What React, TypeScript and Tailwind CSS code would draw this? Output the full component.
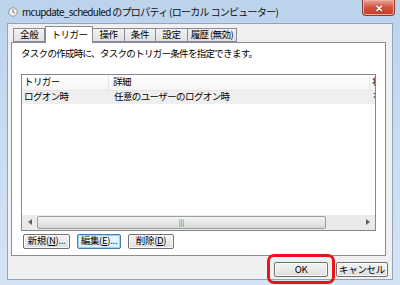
import type { ReactNode } from "react";

const jp =
  "font-['Noto_Sans_CJK_JP','Noto_Sans',sans-serif] [font-feature-settings:\"palt\"_1] [font-kerning:normal]";

function Tab({ label, active, tight }: { label: string; active?: boolean; tight?: boolean }) {
  if (active) {
    return (
      <div className="relative z-10 -mb-px flex h-[17px] items-center border border-b-0 border-[#898c95] bg-white px-[5px] text-[9.5px] leading-none tracking-[-0.5px] text-black">
        {label}
      </div>
    );
  }
  return (
    <div
      className={
        "-ml-px flex h-[14px] items-center border border-[#898c95] bg-gradient-to-b from-[#f3f3f3] to-[#e1e1e1] text-[9.5px] leading-none text-black first:ml-0 " +
        (tight ? "px-[3px] tracking-[-0.6px]" : "px-[6px] tracking-[-0.3px]")
      }
    >
      {label}
    </div>
  );
}

function Button({ children, width, focused }: { children: ReactNode; width: string; focused?: boolean }) {
  return (
    <div
      className={
        "flex h-[15px] items-center justify-center rounded-[2px] border text-[9.5px] leading-none tracking-[-0.3px] text-black " +
        width +
        (focused
          ? " border-[#3c7fb1] bg-gradient-to-b from-[#eaf6fd] to-[#d9effc] shadow-[inset_0_0_0_1px_#9fd4f4]"
          : " border-[#707070] bg-gradient-to-b from-[#f2f2f2] via-[#ebebeb] to-[#dcdcdc] shadow-[inset_0_0_0_1px_#fbfbfb]")
      }
    >
      {children}
    </div>
  );
}

function ClockIcon() {
  return (
    <svg width="10" height="10" viewBox="0 0 10 10">
      <circle cx="5" cy="5" r="4.2" fill="#f4f4f0" stroke="#8a8a80" strokeWidth="0.9" />
      <path d="M5 2.4V5L6.8 6.2" fill="none" stroke="#555" strokeWidth="0.9" />
    </svg>
  );
}

export default function App() {
  return (
    <div className={"relative h-[285px] w-[400px] overflow-hidden bg-gradient-to-b from-[#bcd3ec] via-[#c9dcf1] to-[#d5e4f4] " + jp}>
      {/* title bar */}
      <div className="flex h-[23px] items-start">
        <div className="flex items-center gap-[4px] pl-[8px] pt-[7px]">
          <ClockIcon />
          <span className="text-[10px] leading-none tracking-[-0.7px] text-[#111]">
            mcupdate_scheduled のプロパティ (ローカル コンピューター)
          </span>
        </div>
        <div className="ml-auto mr-[5px] flex h-[16px] w-[33px] items-center justify-center rounded-b-[4px] border border-t-0 border-[#8c3a32] bg-gradient-to-b from-[#e8a496] via-[#d0533f] to-[#c43e2b] shadow-[inset_0_0_0_1px_#eeb0a4]">
          <span className="text-[10px] font-bold leading-none text-white [text-shadow:0_0_2px_#5a1a10]">✕</span>
        </div>
      </div>

      {/* client area */}
      <div className="mx-[7px] flex h-[257px] flex-col border border-[#8ea4bf] bg-[#f0f0f0]">
        {/* tabs */}
        <div className="flex h-[18px] items-end pl-[5px] pt-[1px]">
          <Tab label="全般" />
          <Tab label="トリガー" active />
          <Tab label="操作" />
          <Tab label="条件" />
          <Tab label="設定" />
          <Tab label="履歴 (無効)" tight />
        </div>

        {/* panel */}
        <div className="ml-[3px] mr-[6px] flex h-[214px] flex-col border border-[#898c95] bg-white px-[9px]">
          <div className="pt-[6px] text-[9.5px] leading-none tracking-[-0.7px] text-black">
            タスクの作成時に、タスクのトリガー条件を指定できます。
          </div>

          {/* list view */}
          <div className="mt-[15px] flex h-[157px] flex-col border border-[#828790] bg-white">
            <div className="flex h-[16px] border-b border-[#e5e5e5] bg-gradient-to-b from-white to-[#f5f5f5] text-[9.5px] leading-none tracking-[-0.6px] text-black">
              <div className="flex w-[87px] items-center border-r border-[#e5e5e5] pl-[2px]">トリガー</div>
              <div className="flex w-[261px] items-center border-r border-[#e5e5e5] pl-[4px]">詳細</div>
              <div className="flex min-w-0 flex-1 items-center overflow-hidden pl-[2px]">
                <span className="w-[5px] overflow-hidden whitespace-nowrap">状態</span>
              </div>
            </div>
            <div className="flex h-[13px] bg-[#efefef] text-[9.5px] leading-none tracking-[-0.6px] text-black">
              <div className="flex w-[88px] items-center pl-[2px]">ログオン時</div>
              <div className="flex w-[261px] items-center pl-[4px]">任意のユーザーのログオン時</div>
              <div className="flex min-w-0 flex-1 items-center overflow-hidden pl-[2px]">
                <span className="w-[5px] overflow-hidden whitespace-nowrap">有効</span>
              </div>
            </div>
            <div className="flex-1" />
            {/* horizontal scrollbar */}
            <div className="flex h-[15px] items-center bg-[#eaeaea]">
              <div className="flex h-full w-[15px] items-center justify-center">
                <svg width="4" height="6" viewBox="0 0 4 6"><path d="M4 0V6L0 3Z" fill="#606060" /></svg>
              </div>
              <div className="flex h-[13px] w-[289px] items-center justify-center rounded-[2px] border border-[#9c9c9c] bg-gradient-to-b from-[#f4f4f4] to-[#d9d9d9]">
                <span className="text-[7px] leading-none text-[#555]">|||</span>
              </div>
              <div className="flex-1" />
              <div className="flex h-full w-[15px] items-center justify-center">
                <svg width="4" height="6" viewBox="0 0 4 6"><path d="M0 0V6L4 3Z" fill="#606060" /></svg>
              </div>
            </div>
          </div>

          {/* list buttons */}
          <div className="mt-[3px] flex gap-[7px] pl-[2px]">
            <Button width="w-[47px]">新規(<span className="underline">N</span>)...</Button>
            <Button width="w-[44px]" focused>編集(<span className="underline">E</span>)...</Button>
            <Button width="w-[46px]">削除(<span className="underline">D</span>)</Button>
          </div>
        </div>

        {/* dialog buttons */}
        <div className="mt-[6px] flex justify-end gap-[8px] pr-[4px]">
          <div className="relative">
            <Button width="w-[54px]">OK</Button>
            <div className="absolute -inset-x-[7px] -bottom-[7px] -top-[8px] rounded-[7px] border-[3px] border-[#e8141b]" />
          </div>
          <Button width="w-[52px]">キャンセル</Button>
        </div>
      </div>
    </div>
  );
}
